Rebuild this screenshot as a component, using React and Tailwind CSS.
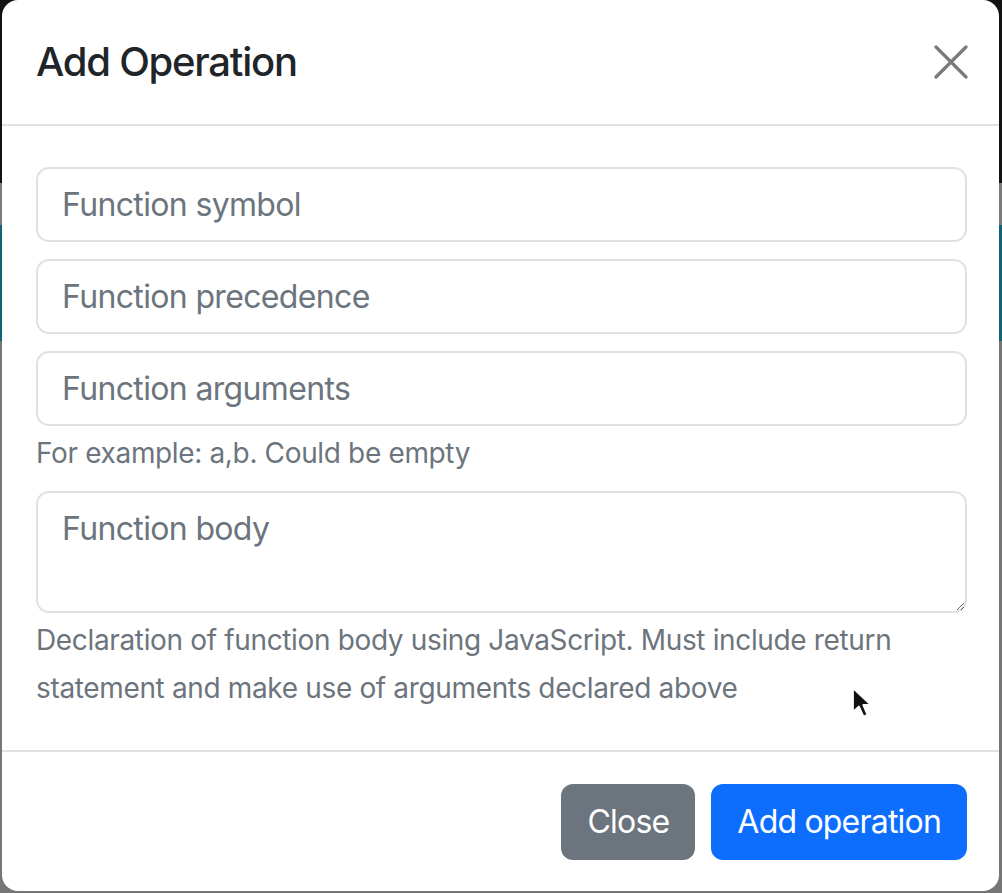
import React from "react";

function CloseIcon() {
  return (
    <svg width="34" height="34" viewBox="0 0 34 34" fill="none" className="mr-[-1px]">
      <path d="M2 2 L32 32 M32 2 L2 32" stroke="#7a7a7a" strokeWidth="3.2" strokeLinecap="round" />
    </svg>
  );
}

function Cursor() {
  return (
    <svg width="24" height="36" viewBox="0 0 24 36" className="absolute left-[851px] top-[686px]">
      <path
        d="M2 2 L2 26 L8 20.5 L12.5 30.5 L16.5 28.8 L12.2 19 L20 19 Z"
        fill="#111"
        stroke="#fff"
        strokeWidth="1.8"
        strokeLinejoin="round"
      />
    </svg>
  );
}

export default function App() {
  const font = { fontFamily: "Inter, 'Liberation Sans', Arial, sans-serif" };
  const inputCls =
    "h-[75px] w-[931px] border-2 border-[#dee2e6] rounded-[13px] px-[24px] text-[32px] tracking-[-0.65px] text-[#212529] placeholder:text-[#6c757d] outline-none";
  return (
    <div className="relative w-[1002px] h-[893px] overflow-hidden bg-[#757575]" style={font}>
      {/* page behind backdrop */}
      <div className="flex flex-col">
        <div className="h-[183px] bg-[#121212]" />
        <div className="h-[42px] bg-[#7b7b7b]" />
        <div className="h-[116px] bg-[#0f6573]" />
        <div className="h-[552px] bg-[#767676]" />
      </div>

      {/* modal */}
      <div className="absolute left-[2px] top-0 w-[997px] h-[891px] bg-white rounded-[16px] flex flex-col">
        <div className="h-[124px] flex items-center justify-between pl-[34px] pr-[32px] border-b-2 border-[#dee2e6] box-content">
          <h5 className="text-[40px] leading-[60px] font-medium text-[#212529] tracking-[-1.25px]">Add Operation</h5>
          <CloseIcon />
        </div>

        <div className="flex flex-col px-[34px] pt-[41px] pb-[38px]">
          <input className={inputCls + " mb-[17px]"} placeholder="Function symbol" />
          <input className={inputCls + " mb-[17px]"} placeholder="Function precedence" />
          <input className={inputCls} placeholder="Function arguments" />
          <div className="mt-[6px] text-[28px] leading-[42px] tracking-[-0.35px] text-[#6c757d]">For example: a,b. Could be empty</div>
          <textarea
            className="mt-[17px] h-[122px] w-[931px] border-2 border-[#dee2e6] rounded-[13px] px-[24px] py-[12px] text-[32px] leading-[48px] tracking-[-0.65px] text-[#212529] placeholder:text-[#6c757d] outline-none"
            placeholder="Function body"
          />
          <div className="mt-[3px] text-[28px] leading-[48px] tracking-[-0.35px] text-[#6c757d] w-[900px]">
            Declaration of function body using JavaScript. Must include return statement and make use of arguments declared above
          </div>
        </div>

        <div className="border-t-2 border-[#dee2e6] flex justify-end gap-[16px] pt-[32px] pr-[32px]">
          <button className="h-[76px] px-[26px] rounded-[12px] bg-[#6c757d] text-white text-[32px] tracking-[-0.8px]">Close</button>
          <button className="h-[76px] px-[26px] rounded-[12px] bg-[#0d6efd] text-white text-[32px] tracking-[-0.8px]">Add operation</button>
        </div>
      </div>

      <Cursor />
    </div>
  );
}
